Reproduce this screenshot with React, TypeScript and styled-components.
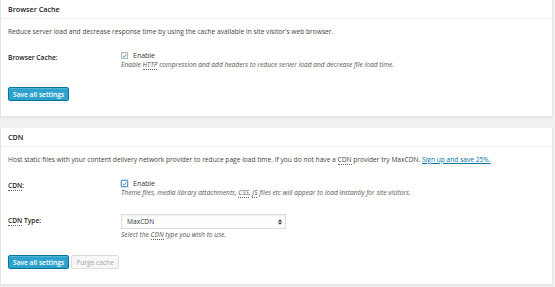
import * as React from "react";
import styled, { createGlobalStyle } from "styled-components";

const GlobalStyle = createGlobalStyle`
  html, body {
    margin: 0;
    padding: 0;
    background: #f1f1f1;
  }
  body {
    font-family: "Open Sans", "Liberation Sans", sans-serif;
    color: #444;
    font-size: 6.65px;
  }
`;

const Page = styled.div`
  width: 553px;
  padding-bottom: 5px;
  display: flex;
  flex-direction: column;
  gap: 11px;
`;

const Panel = styled.section`
  background: #fff;
  border: 1px solid #e5e5e5;
  border-top: none;
  box-shadow: 0 1px 1px rgba(0, 0, 0, 0.04);
  padding-bottom: 15px;
`;

const PanelHeader = styled.h3`
  margin: 0;
  height: 18px;
  padding: 0 7px;
  display: flex;
  align-items: center;
  border-bottom: 1px solid #eee;
  font-size: 7.2px;
  font-weight: 600;
  color: #222;
`;

const PanelBody = styled.div`
  padding: 0 7px;
`;

const Intro = styled.p`
  margin: 8px 0 0;
  line-height: 10px;
`;

const FormTable = styled.div`
  margin-top: 14px;
  display: flex;
  flex-direction: column;
  gap: 17px;
`;

const Row = styled.div`
  display: grid;
  grid-template-columns: 113px 1fr;
`;

const Label = styled.div`
  font-weight: 600;
  color: #222;
  line-height: 9px;
  padding-top: 2px;
`;

const Field = styled.div`
  display: flex;
  flex-direction: column;
`;

const CheckLine = styled.label`
  display: flex;
  align-items: center;
  gap: 5px;
  line-height: 9px;
  font-size: 7px;
  color: #333;
`;

const Box = styled.span<{ $focus?: boolean }>`
  width: 7px;
  height: 7px;
  box-sizing: border-box;
  border: 1px solid ${(p) => (p.$focus ? "#5b9dd9" : "#b4b9be")};
  box-shadow: ${(p) =>
    p.$focus ? "0 0 2px rgba(30, 140, 190, 0.8)" : "inset 0 1px 2px rgba(0,0,0,0.1)"};
  background: #fff;
  display: flex;
  align-items: center;
  justify-content: center;
`;

const Description = styled.p`
  margin: 0;
  font-style: italic;
  line-height: 9px;
  color: #555;
`;

const Abbr = styled.abbr`
  text-decoration: none;
  border-bottom: 1px dotted #666;
`;

const Link = styled.a`
  color: #0074a2;
  text-decoration: underline;
`;

const SelectBox = styled.div`
  width: 165px;
  height: 15px;
  box-sizing: border-box;
  border: 1px solid #ddd;
  box-shadow: inset 0 1px 2px rgba(0, 0, 0, 0.07);
  background: #fff;
  display: flex;
  align-items: center;
  justify-content: space-between;
  padding: 0 3px 0 5px;
  color: #333;
  margin-bottom: 1px;
`;

const Actions = styled.div<{ $gap: number }>`
  display: flex;
  gap: 2px;
  margin-top: ${(p) => p.$gap}px;
`;

const Button = styled.button<{ $primary?: boolean }>`
  height: 14px;
  padding: 0 4px;
  font-family: inherit;
  font-size: 6.65px;
  font-weight: ${(p) => (p.$primary ? 600 : 400)};
  border-radius: 2px;
  border: 1px solid ${(p) => (p.$primary ? "#0074a2" : "#ddd")};
  background: ${(p) => (p.$primary ? "#2ea2cc" : "#f7f7f7")};
  color: ${(p) => (p.$primary ? "#fff" : "#a0a5aa")};
  box-shadow: ${(p) =>
    p.$primary ? "inset 0 1px 0 rgba(120, 200, 230, 0.5)" : "none"};
  cursor: pointer;
`;

const Check = () => (
  <svg width="6" height="6" viewBox="0 0 10 10">
    <path d="M1.5 5.2 L4 7.6 L8.6 2.2" fill="none" stroke="#1e8cbe" strokeWidth="1.8" />
  </svg>
);

const Arrows = () => (
  <svg width="4" height="6" viewBox="0 0 4 6">
    <path d="M0 2.4 L2 0.2 L4 2.4 Z M0 3.6 L2 5.8 L4 3.6 Z" fill="#333" />
  </svg>
);

export default function App() {
  return (
    <>
      <GlobalStyle />
      <Page>
        <Panel>
          <PanelHeader>Browser Cache</PanelHeader>
          <PanelBody>
            <Intro>
              Reduce server load and decrease response time by using the cache available in
              site visitor's web browser.
            </Intro>
            <FormTable>
              <Row>
                <Label>Browser Cache:</Label>
                <Field>
                  <CheckLine>
                    <Box>
                      <Check />
                    </Box>
                    Enable
                  </CheckLine>
                  <Description>
                    Enable <Abbr>HTTP</Abbr> compression and add headers to reduce server load
                    and decrease file load time.
                  </Description>
                </Field>
              </Row>
            </FormTable>
            <Actions $gap={18}>
              <Button $primary>Save all settings</Button>
            </Actions>
          </PanelBody>
        </Panel>

        <Panel>
          <PanelHeader>CDN</PanelHeader>
          <PanelBody>
            <Intro>
              Host static files with your content delivery network provider to reduce page load
              time. If you do not have a <Abbr>CDN</Abbr> provider try MaxCDN.{" "}
              <Link href="#">Sign up and save 25%.</Link>
            </Intro>
            <FormTable>
              <Row>
                <Label>
                  <Abbr>CDN</Abbr>:
                </Label>
                <Field>
                  <CheckLine>
                    <Box $focus>
                      <Check />
                    </Box>
                    Enable
                  </CheckLine>
                  <Description>
                    Theme files, media library attachments, <Abbr>CSS</Abbr>, <Abbr>JS</Abbr>{" "}
                    files etc will appear to load instantly for site visitors.
                  </Description>
                </Field>
              </Row>
              <Row>
                <Label>
                  <Abbr>CDN</Abbr> Type:
                </Label>
                <Field>
                  <SelectBox>
                    MaxCDN
                    <Arrows />
                  </SelectBox>
                  <Description>
                    Select the <Abbr>CDN</Abbr> type you wish to use.
                  </Description>
                </Field>
              </Row>
            </FormTable>
            <Actions $gap={16}>
              <Button $primary>Save all settings</Button>
              <Button disabled>Purge cache</Button>
            </Actions>
          </PanelBody>
        </Panel>
      </Page>
    </>
  );
}
